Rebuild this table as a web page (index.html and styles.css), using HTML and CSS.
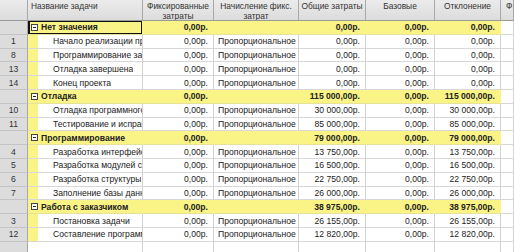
FILE: index.html
```html
<!DOCTYPE html>
<html>
<head>
<meta charset="utf-8">
<link rel="stylesheet" href="styles.css">
</head>
<body>
<div class="sheet">
  <div class="row head">
    <div class="c num"></div>
    <div class="c name">Название задачи</div>
    <div class="c ctr">Фиксированные<br>затраты</div>
    <div class="c ctr">Начисление фикс.<br>затрат</div>
    <div class="c ctr">Общие затраты</div>
    <div class="c ctr">Базовые</div>
    <div class="c ctr">Отклонение</div>
    <div class="c last">Ф</div>
  </div>

  <div class="row grp">
    <div class="c num"></div>
    <div class="c name sel"><span class="box"></span>Нет значения</div>
    <div class="c r">0,00р.</div>
    <div class="c"></div>
    <div class="c r">0,00р.</div>
    <div class="c r">0,00р.</div>
    <div class="c r">0,00р.</div>
    <div class="c last"></div>
  </div>
  <div class="row task">
    <div class="c num">1</div>
    <div class="c name"><span class="ind"></span><span class="t">Начало реализации проекта</span></div>
    <div class="c r">0,00р.</div>
    <div class="c">Пропорциональное</div>
    <div class="c r">0,00р.</div>
    <div class="c r">0,00р.</div>
    <div class="c r">0,00р.</div>
    <div class="c last"></div>
  </div>
  <div class="row task">
    <div class="c num">8</div>
    <div class="c name"><span class="ind"></span><span class="t">Программирование завершено</span></div>
    <div class="c r">0,00р.</div>
    <div class="c">Пропорциональное</div>
    <div class="c r">0,00р.</div>
    <div class="c r">0,00р.</div>
    <div class="c r">0,00р.</div>
    <div class="c last"></div>
  </div>
  <div class="row task">
    <div class="c num">13</div>
    <div class="c name"><span class="ind"></span><span class="t">Отладка завершена</span></div>
    <div class="c r">0,00р.</div>
    <div class="c">Пропорциональное</div>
    <div class="c r">0,00р.</div>
    <div class="c r">0,00р.</div>
    <div class="c r">0,00р.</div>
    <div class="c last"></div>
  </div>
  <div class="row task">
    <div class="c num">14</div>
    <div class="c name"><span class="ind"></span><span class="t">Конец проекта</span></div>
    <div class="c r">0,00р.</div>
    <div class="c">Пропорциональное</div>
    <div class="c r">0,00р.</div>
    <div class="c r">0,00р.</div>
    <div class="c r">0,00р.</div>
    <div class="c last"></div>
  </div>

  <div class="row grp">
    <div class="c num"></div>
    <div class="c name"><span class="box"></span>Отладка</div>
    <div class="c r">0,00р.</div>
    <div class="c"></div>
    <div class="c r">115 000,00р.</div>
    <div class="c r">0,00р.</div>
    <div class="c r">115 000,00р.</div>
    <div class="c last"></div>
  </div>
  <div class="row task">
    <div class="c num">10</div>
    <div class="c name"><span class="ind"></span><span class="t">Отладка программного модуля</span></div>
    <div class="c r">0,00р.</div>
    <div class="c">Пропорциональное</div>
    <div class="c r">30 000,00р.</div>
    <div class="c r">0,00р.</div>
    <div class="c r">30 000,00р.</div>
    <div class="c last"></div>
  </div>
  <div class="row task">
    <div class="c num">11</div>
    <div class="c name"><span class="ind"></span><span class="t">Тестирование и исправление</span></div>
    <div class="c r">0,00р.</div>
    <div class="c">Пропорциональное</div>
    <div class="c r">85 000,00р.</div>
    <div class="c r">0,00р.</div>
    <div class="c r">85 000,00р.</div>
    <div class="c last"></div>
  </div>

  <div class="row grp">
    <div class="c num"></div>
    <div class="c name"><span class="box"></span>Программирование</div>
    <div class="c r">0,00р.</div>
    <div class="c"></div>
    <div class="c r">79 000,00р.</div>
    <div class="c r">0,00р.</div>
    <div class="c r">79 000,00р.</div>
    <div class="c last"></div>
  </div>
  <div class="row task">
    <div class="c num">4</div>
    <div class="c name"><span class="ind"></span><span class="t">Разработка интерфейса</span></div>
    <div class="c r">0,00р.</div>
    <div class="c">Пропорциональное</div>
    <div class="c r">13 750,00р.</div>
    <div class="c r">0,00р.</div>
    <div class="c r">13 750,00р.</div>
    <div class="c last"></div>
  </div>
  <div class="row task">
    <div class="c num">5</div>
    <div class="c name"><span class="ind"></span><span class="t">Разработка модулей системы</span></div>
    <div class="c r">0,00р.</div>
    <div class="c">Пропорциональное</div>
    <div class="c r">16 500,00р.</div>
    <div class="c r">0,00р.</div>
    <div class="c r">16 500,00р.</div>
    <div class="c last"></div>
  </div>
  <div class="row task">
    <div class="c num">6</div>
    <div class="c name"><span class="ind"></span><span class="t">Разработка структуры</span></div>
    <div class="c r">0,00р.</div>
    <div class="c">Пропорциональное</div>
    <div class="c r">22 750,00р.</div>
    <div class="c r">0,00р.</div>
    <div class="c r">22 750,00р.</div>
    <div class="c last"></div>
  </div>
  <div class="row task">
    <div class="c num">7</div>
    <div class="c name"><span class="ind"></span><span class="t">Заполнение базы данных</span></div>
    <div class="c r">0,00р.</div>
    <div class="c">Пропорциональное</div>
    <div class="c r">26 000,00р.</div>
    <div class="c r">0,00р.</div>
    <div class="c r">26 000,00р.</div>
    <div class="c last"></div>
  </div>

  <div class="row grp">
    <div class="c num"></div>
    <div class="c name"><span class="box"></span>Работа с заказчиком</div>
    <div class="c r">0,00р.</div>
    <div class="c"></div>
    <div class="c r">38 975,00р.</div>
    <div class="c r">0,00р.</div>
    <div class="c r">38 975,00р.</div>
    <div class="c last"></div>
  </div>
  <div class="row task">
    <div class="c num">3</div>
    <div class="c name"><span class="ind"></span><span class="t">Постановка задачи</span></div>
    <div class="c r">0,00р.</div>
    <div class="c">Пропорциональное</div>
    <div class="c r">26 155,00р.</div>
    <div class="c r">0,00р.</div>
    <div class="c r">26 155,00р.</div>
    <div class="c last"></div>
  </div>
  <div class="row task">
    <div class="c num">12</div>
    <div class="c name"><span class="ind"></span><span class="t">Составление программы</span></div>
    <div class="c r">0,00р.</div>
    <div class="c">Пропорциональное</div>
    <div class="c r">12 820,00р.</div>
    <div class="c r">0,00р.</div>
    <div class="c r">12 820,00р.</div>
    <div class="c last"></div>
  </div>
  <div class="row task empty">
    <div class="c num"></div>
    <div class="c name"></div>
    <div class="c"></div>
    <div class="c"></div>
    <div class="c"></div>
    <div class="c"></div>
    <div class="c"></div>
    <div class="c last"></div>
  </div>
</div>
</body>
</html>
```
FILE: styles.css
```css
html, body {
  margin: 0;
  padding: 0;
  background: #ffffff;
  overflow: hidden;
}
.sheet {
  width: 514px;
  height: 252px;
  overflow: hidden;
  font-family: "Liberation Sans", Arial, sans-serif;
  font-size: 8.6px;
  color: #222;
}
.row {
  display: grid;
  grid-template-columns: 28px 115px 71px 85px 67px 69px 66px 1fr;
  height: 13.8px;
}
.c {
  box-sizing: border-box;
  border-right: 1px solid #d2d2d2;
  border-bottom: 1px solid #d8d8d8;
  padding: 0 5px 0 4px;
  white-space: nowrap;
  overflow: hidden;
  display: flex;
  align-items: center;
}
.c.r {
  justify-content: flex-end;
}
.head {
  height: 21px;
}
.head .c {
  background: linear-gradient(#ebebeb, #dcdcdc);
  border-right: 1px solid #a8a8a8;
  border-bottom: 1px solid #9a9a9a;
  align-items: flex-start;
  padding-top: 2px;
  line-height: 9.5px;
  font-size: 8.4px;
  color: #333;
}
.head .ctr {
  justify-content: center;
  text-align: center;
  padding: 2px 0 0 0;
}
.head .name {
  padding-left: 3px;
}
.head .last {
  padding-left: 5px;
}
.num {
  background: #dcdcdc;
  border-right: 1px solid #a8a8a8;
  border-bottom: 1px solid #c4c4c4;
  justify-content: center;
  padding: 0;
  color: #333;
}
.grp .c:not(.num):not(.last) {
  background: #faf487;
  font-weight: bold;
  border-right-color: #faf487;
  border-bottom-color: #e6e29a;
}
.grp .name {
  padding-left: 2px;
}
.sel {
  position: relative;
}
.sel::after {
  content: "";
  position: absolute;
  left: 0;
  top: -1px;
  right: -1px;
  bottom: -1px;
  border: 2px solid #111;
  pointer-events: none;
}
.box {
  flex: none;
  width: 7px;
  height: 7px;
  box-sizing: border-box;
  border: 1px solid #444;
  background: #fff;
  margin-right: 3px;
  margin-left: 1px;
  position: relative;
}
.box::after {
  content: "";
  position: absolute;
  left: 1px;
  right: 1px;
  top: 2px;
  height: 1px;
  background: #222;
}
.task .name {
  padding: 0;
  text-overflow: clip;
}
.ind {
  flex: none;
  align-self: stretch;
  width: 10px;
  background: #faf487;
  margin-right: 15px;
  margin-bottom: -1px;
}
.t {
  overflow: hidden;
}
.empty .ind {
  display: none;
}
.last {
  padding-left: 5px;
}
```
